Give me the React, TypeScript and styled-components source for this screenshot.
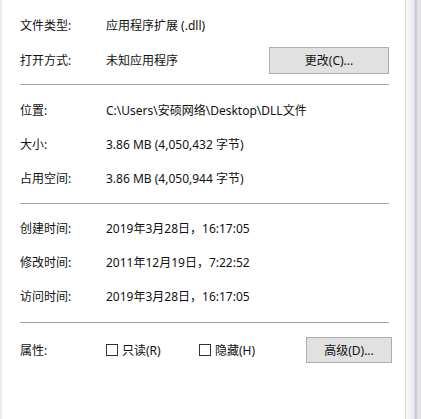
import React from "react";
import styled, { createGlobalStyle } from "styled-components";

const Global = createGlobalStyle`
  html, body { margin: 0; padding: 0; background: #ffffff; }
  body { font-family: "Noto Sans", "Noto Sans CJK SC", sans-serif; }
  * { box-sizing: border-box; }
`;

const Window = styled.div`
  display: flex;
  width: 421px;
  height: 419px;
  overflow: hidden;
`;

const Panel = styled.div`
  width: 405px;
  height: 100%;
  background: #ffffff;
  border-left: 2px solid #ececec;
  padding: 8px 16px 0 18px;
  display: flex;
  flex-direction: column;
`;

const Edge = styled.div`
  flex: 1;
  height: 100%;
  background: linear-gradient(
    to right,
    #d8d8d8 0px,
    #d8d8d8 1px,
    #f7f7f7 1px,
    #f4f4f4 5px,
    #e9e9ec 9px,
    #c9cce0 10px,
    #c9cce0 12px,
    #e2e2e6 12px,
    #e4e4e6 16px
  );
`;

const Section = styled.div<{ $top: number }>`
  display: flex;
  flex-direction: column;
  padding-top: ${(p) => p.$top}px;
`;

const Row = styled.div<{ $h?: number }>`
  display: flex;
  align-items: center;
  height: ${(p) => p.$h ?? 34}px;
  font-size: 12px;
  color: #111111;
  white-space: nowrap;
`;

const Label = styled.div`
  width: 86px;
  flex: none;
`;

const Value = styled.div`
  flex: 1;
`;

const Separator = styled.div<{ $top: number }>`
  height: 1px;
  background: #a5a5a5;
  margin-top: ${(p) => p.$top}px;
`;

const Button = styled.div<{ $w: number; $h: number; $mr?: number }>`
  width: ${(p) => p.$w}px;
  height: ${(p) => p.$h}px;
  margin-right: ${(p) => p.$mr ?? 0}px;
  background: #e1e1e1;
  border: 1px solid #adadad;
  display: flex;
  align-items: center;
  justify-content: center;
  font-size: 12px;
  color: #111111;
  flex: none;
`;

const CheckGroup = styled.div<{ $w: number }>`
  display: flex;
  align-items: center;
  width: ${(p) => p.$w}px;
  flex: none;
`;

const Box = styled.span`
  width: 12px;
  height: 12px;
  border: 1px solid #333333;
  background: #ffffff;
  margin-right: 4px;
  flex: none;
`;

const Spacer = styled.div`
  flex: 1;
`;

export default function App() {
  return (
    <>
      <Global />
      <Window>
        <Panel>
          <Section $top={0}>
            <Row $h={34}>
              <Label>文件类型:</Label>
              <Value>应用程序扩展 (.dll)</Value>
            </Row>
            <Row $h={36}>
              <Label>打开方式:</Label>
              <Value>未知应用程序</Value>
              <Button $w={120} $h={27}>更改(C)...</Button>
            </Row>
          </Section>
          <Separator $top={6} />
          <Section $top={8}>
            <Row>
              <Label>位置:</Label>
              <Value>C:\Users\安硕网络\Desktop\DLL文件</Value>
            </Row>
            <Row>
              <Label>大小:</Label>
              <Value>3.86 MB (4,050,432 字节)</Value>
            </Row>
            <Row>
              <Label>占用空间:</Label>
              <Value>3.86 MB (4,050,944 字节)</Value>
            </Row>
          </Section>
          <Separator $top={8} />
          <Section $top={7}>
            <Row>
              <Label>创建时间:</Label>
              <Value>2019年3月28日，16:17:05</Value>
            </Row>
            <Row>
              <Label>修改时间:</Label>
              <Value>2011年12月19日，7:22:52</Value>
            </Row>
            <Row>
              <Label>访问时间:</Label>
              <Value>2019年3月28日，16:17:05</Value>
            </Row>
          </Section>
          <Separator $top={9} />
          <Section $top={10}>
            <Row>
              <Label>属性:</Label>
              <CheckGroup $w={93}>
                <Box />
                只读(R)
              </CheckGroup>
              <CheckGroup $w={100}>
                <Box />
                隐藏(H)
              </CheckGroup>
              <Spacer />
              <Button $w={86} $h={26} $mr={-3}>
                高级(D)...
              </Button>
            </Row>
          </Section>
        </Panel>
        <Edge />
      </Window>
    </>
  );
}
